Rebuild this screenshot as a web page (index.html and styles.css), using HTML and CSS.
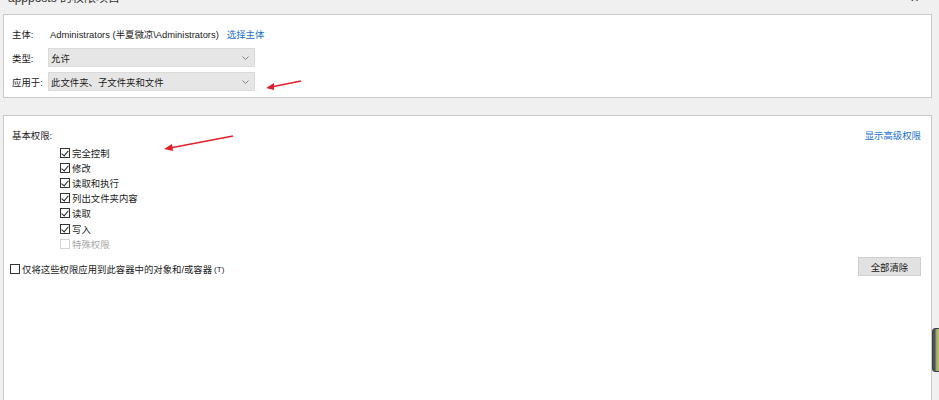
FILE: index.html
```html
<!DOCTYPE html>
<html>
<head>
<meta charset="utf-8">
<link rel="stylesheet" href="styles.css">
</head>
<body>
<div class="titlebar">
  <span class="title">appposts 的权限项目</span>
  <span class="winbtns"><span class="wb">—</span><span class="wb">✕</span></span>
</div>
<div class="panel panel-top">
  <div class="row">
    <span class="lbl">主体:</span>
    <span class="val">Administrators (半夏微凉\Administrators)</span>
    <a class="link">选择主体</a>
  </div>
  <div class="row">
    <span class="lbl">类型:</span>
    <div class="select"><span>允许</span><svg class="chev" width="7" height="4" viewBox="0 0 7 4"><polyline points="0.5,0.5 3.5,3.5 6.5,0.5" fill="none" stroke="#777" stroke-width="0.9"/></svg></div>
  </div>
  <div class="row">
    <span class="lbl">应用于:</span>
    <div class="select"><span>此文件夹、子文件夹和文件</span><svg class="chev" width="7" height="4" viewBox="0 0 7 4"><polyline points="0.5,0.5 3.5,3.5 6.5,0.5" fill="none" stroke="#777" stroke-width="0.9"/></svg></div>
  </div>
</div>
<div class="panel panel-main">
  <div class="head">
    <span>基本权限:</span>
    <a class="link">显示高级权限</a>
  </div>
  <ul class="perms">
    <li><span class="cb on"></span>完全控制</li>
    <li><span class="cb on"></span>修改</li>
    <li><span class="cb on"></span>读取和执行</li>
    <li><span class="cb on"></span>列出文件夹内容</li>
    <li><span class="cb on"></span>读取</li>
    <li><span class="cb on"></span>写入</li>
    <li class="dis"><span class="cb"></span>特殊权限</li>
  </ul>
  <div class="foot">
    <label class="only"><span class="cb"></span>仅将这些权限应用到此容器中的对象和/或容器<span class="acc">(T)</span></label>
    <button class="btn">全部清除</button>
  </div>
</div>
<svg class="arrow a1" width="40" height="14" viewBox="0 0 40 14"><line x1="36" y1="3" x2="6" y2="9" stroke="#e0202a" stroke-width="1.5"/><polygon points="1,10 9,5 9,12" fill="#e0202a"/></svg>
<svg class="arrow a2" width="74" height="18" viewBox="0 0 74 18"><line x1="70" y1="2" x2="7" y2="14" stroke="#e0202a" stroke-width="1.5"/><polygon points="1,15 9,10 10,17" fill="#e0202a"/></svg>
<div class="thumb"></div>
</body>
</html>
```
FILE: styles.css
```css
* { box-sizing: border-box; }
html, body { margin: 0; padding: 0; }
body {
  width: 939px;
  height: 400px;
  overflow: hidden;
  background: #f0f0f0;
  font-family: "Liberation Sans", "Noto Sans CJK SC", sans-serif;
  font-size: 9.4px;
  color: #1a1a1a;
  position: relative;
}
.titlebar {
  height: 7px;
  overflow: hidden;
  position: relative;
  display: flex;
  justify-content: space-between;
  padding: 0 20px 0 8px;
}
.title {
  font-size: 12px;
  line-height: 12px;
  margin-top: -8px;
  color: #333;
}
.winbtns { display: flex; gap: 22px; margin-top: -8px; font-size: 11px; color: #444; line-height: 12px; }
.panel {
  background: #fff;
  border: 1px solid #c9c9c9;
  margin: 0 7px 0 3px;
  position: relative;
}
.panel-top {
  margin-top: 7px;
  height: 84px;
  padding: 9px 8px 0 8px;
  display: flex;
  flex-direction: column;
  gap: 5px;
}
.row {
  display: flex;
  align-items: center;
  height: 19px;
}
.lbl { width: 36px; }
.val { margin-left: 2px; }
.link { color: #1a6fcf; cursor: pointer; }
.row .link { margin-left: 8px; }
.select {
  width: 207px;
  height: 19px;
  background: #e6e6e6;
  border: 1px solid #dadada;
  display: flex;
  align-items: center;
  justify-content: space-between;
  padding: 0 5px 0 2px;
}
.chev { display: block; }
.panel-main {
  margin-top: 17px;
  height: 300px;
  padding: 12px 10px 0 8px;
}
.head {
  display: flex;
  justify-content: space-between;
  align-items: center;
  height: 14px;
}
.perms {
  list-style: none;
  margin: 3px 0 0 48px;
  padding: 0;
}
.perms li {
  display: flex;
  align-items: center;
  height: 15.2px;
  gap: 2px;
}
.perms li.dis { color: #a8a8a8; }
.cb {
  width: 10px;
  height: 10px;
  border: 1px solid #333;
  background: #fff;
  position: relative;
  display: inline-block;
  flex: none;
}
.cb.on::after {
  content: "";
  position: absolute;
  left: 2px;
  top: 0px;
  width: 3px;
  height: 6px;
  border-right: 1px solid #222;
  border-bottom: 1px solid #222;
  transform: rotate(40deg);
}
.dis .cb { border-color: #d4d4d4; }
.foot {
  display: flex;
  justify-content: space-between;
  align-items: flex-end;
  margin-top: 6px;
  margin-left: -2px;
}
.only { display: flex; align-items: center; gap: 2px; margin-bottom: 0; }
.acc { font-size: 8px; }
.btn {
  width: 63px;
  height: 19px;
  background: #e1e1e1;
  border: 1px solid #cfcfcf;
  font-family: inherit;
  font-size: 9.4px;
  color: #1a1a1a;
  padding: 0;
}
.arrow { position: absolute; }
.a1 { left: 265px; top: 78px; }
.a2 { left: 163px; top: 134px; }
.thumb {
  position: absolute;
  left: 932px;
  top: 328px;
  width: 10px;
  height: 44px;
  border-radius: 3px;
  background: linear-gradient(90deg, #4a4f5a 0 2px, #8fa65a 3px, #c9c46a 6px, #5a6070);
  border: 1px solid #3d4250;
}
```
